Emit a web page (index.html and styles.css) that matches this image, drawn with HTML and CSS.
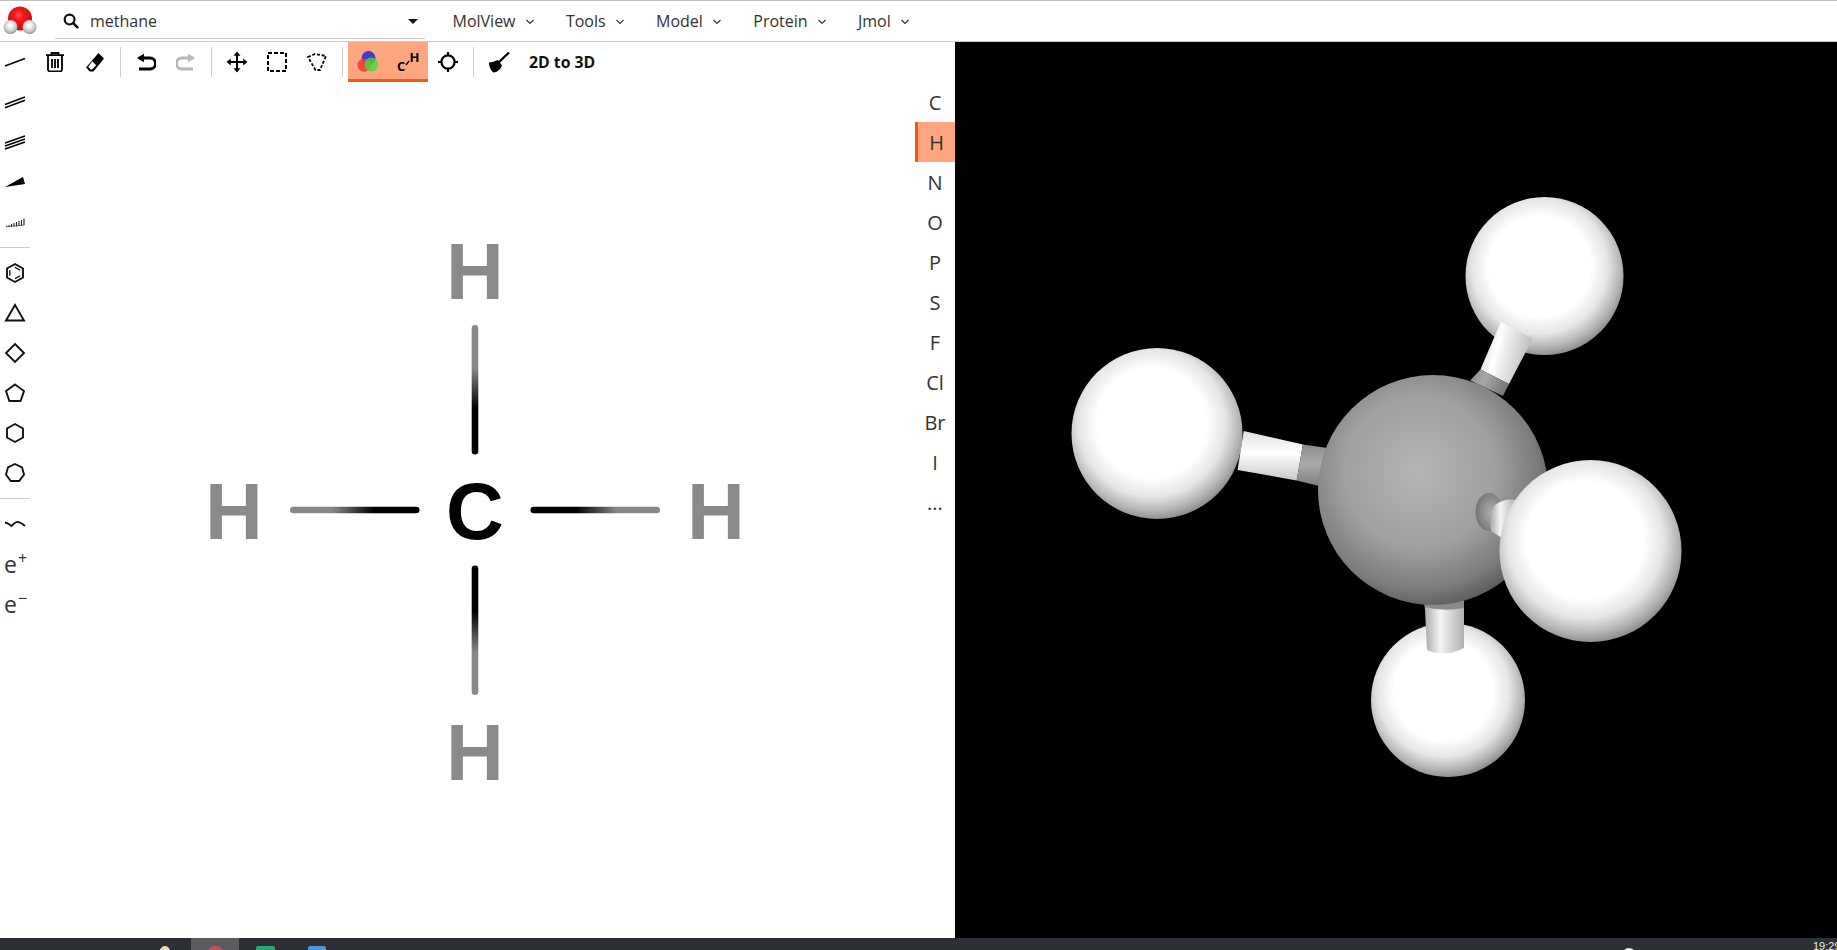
FILE: index.html
```html
<!DOCTYPE html>
<html lang="en">
<head>
<meta charset="utf-8">
<title>MolView</title>
<link rel="stylesheet" href="styles.css">
</head>
<body>
<div class="app">
  <nav class="menubar">
    <svg class="logo" width="40" height="38" viewBox="0 0 40 38">
      <defs>
        <radialGradient id="logoRed" cx="0.45" cy="0.35" r="0.7">
          <stop offset="0" stop-color="#ff5050"/><stop offset="0.3" stop-color="#f01818"/><stop offset="0.8" stop-color="#d80c0c"/><stop offset="1" stop-color="#a01010"/>
        </radialGradient>
        <radialGradient id="logoWhite" cx="0.48" cy="0.4" r="0.62">
          <stop offset="0" stop-color="#ffffff"/><stop offset="0.35" stop-color="#eaeaea"/><stop offset="0.75" stop-color="#bdbdbd"/><stop offset="1" stop-color="#808080"/>
        </radialGradient>
      </defs>
      <circle cx="20" cy="16.5" r="12" fill="url(#logoRed)"/>
      <circle cx="10.5" cy="25" r="7" fill="url(#logoWhite)"/>
      <circle cx="29.5" cy="25" r="7" fill="url(#logoWhite)"/>
    </svg>
    <div class="search">
      <svg class="search-icon" width="16" height="16" viewBox="0 0 16 16"><circle cx="6.6" cy="6.6" r="4.9" fill="none" stroke="#111" stroke-width="2.2"/><path d="M10.2 10.2 14.4 14.4" stroke="#111" stroke-width="2.6" stroke-linecap="round"/></svg>
      <span class="search-text">methane</span>
      <span class="search-caret"></span>
    </div>
    <ul class="menu">
      <li class="menu-item">MolView<svg class="chev" width="10" height="6" viewBox="0 0 10 6"><path d="M1.5 1 5 4.5 8.5 1" fill="none" stroke="#333" stroke-width="1.2"/></svg></li>
      <li class="menu-item">Tools<svg class="chev" width="10" height="6" viewBox="0 0 10 6"><path d="M1.5 1 5 4.5 8.5 1" fill="none" stroke="#333" stroke-width="1.2"/></svg></li>
      <li class="menu-item">Model<svg class="chev" width="10" height="6" viewBox="0 0 10 6"><path d="M1.5 1 5 4.5 8.5 1" fill="none" stroke="#333" stroke-width="1.2"/></svg></li>
      <li class="menu-item">Protein<svg class="chev" width="10" height="6" viewBox="0 0 10 6"><path d="M1.5 1 5 4.5 8.5 1" fill="none" stroke="#333" stroke-width="1.2"/></svg></li>
      <li class="menu-item">Jmol<svg class="chev" width="10" height="6" viewBox="0 0 10 6"><path d="M1.5 1 5 4.5 8.5 1" fill="none" stroke="#333" stroke-width="1.2"/></svg></li>
    </ul>
  </nav>

  <main class="workspace">
    <section class="sketcher">
      <aside class="tools-left">
        <div class="tool"><svg width="22" height="22" viewBox="0 0 22 22"><path d="M1 15 21 7.5" stroke="#000" stroke-width="1.5"/></svg></div>
        <div class="tool"><svg width="22" height="22" viewBox="0 0 22 22"><path d="M1 13.5 21 6M1 16.7 21 9.2" stroke="#000" stroke-width="1.5"/></svg></div>
        <div class="tool"><svg width="22" height="22" viewBox="0 0 22 22"><path d="M1 12 21 5M1 15 21 8M1 18 21 11" stroke="#000" stroke-width="1.5"/></svg></div>
        <div class="tool"><svg width="22" height="22" viewBox="0 0 22 22"><path d="M1 16 19 6 21 13Z" fill="#000"/></svg></div>
        <div class="tool"><svg width="22" height="22" viewBox="0 0 22 22"><path d="M2.5 15.8V14.8M5 15.8V14M7.5 15.8V13M10 15.6V12M12.5 15.4V11M15 15V10M17.5 14.6V9M20 14.2V7.5" stroke="#222" stroke-width="1.1" fill="none"/><path d="M2 15.8 20 14" stroke="#444" stroke-width=".8"/></svg></div>
        <div class="divider"></div>
        <div class="tool"><svg width="22" height="22" viewBox="0 0 22 22"><path d="M11 2 19 6.5V15.5L11 20 3 15.5V6.5Z" fill="none" stroke="#111" stroke-width="1.9"/><path d="M11 5.4 16.2 8.3M16.2 13.7 11 16.6M5.8 13.7V8.3" fill="none" stroke="#111" stroke-width="1.3"/></svg></div>
        <div class="tool"><svg width="22" height="22" viewBox="0 0 22 22"><path d="M11 3 20 18.5H2Z" fill="none" stroke="#111" stroke-width="1.9"/></svg></div>
        <div class="tool"><svg width="22" height="22" viewBox="0 0 22 22"><path d="M11 2 20 11 11 20 2 11Z" fill="none" stroke="#111" stroke-width="1.9"/></svg></div>
        <div class="tool"><svg width="22" height="22" viewBox="0 0 22 22"><path d="M11 2.5 20 9 16.6 19H5.4L2 9Z" fill="none" stroke="#111" stroke-width="1.9"/></svg></div>
        <div class="tool"><svg width="22" height="22" viewBox="0 0 22 22"><path d="M11 2 19 6.5V15.5L11 20 3 15.5V6.5Z" fill="none" stroke="#111" stroke-width="1.9"/></svg></div>
        <div class="tool"><svg width="22" height="22" viewBox="0 0 22 22"><path d="M11 2 18 5.3 20 12.5 15.2 19H6.8L2 12.5 4 5.3Z" fill="none" stroke="#111" stroke-width="1.9"/></svg></div>
        <div class="divider"></div>
        <div class="tool"><svg width="22" height="22" viewBox="0 0 22 22"><path d="M1 9.5Q4 10 7.5 13Q11 9 14 8.8Q18 10 21 13" fill="none" stroke="#111" stroke-width="1.8"/></svg></div>
        <div class="tool tool-text">e<sup class="charge">+</sup></div>
        <div class="tool tool-text">e<sup class="charge">−</sup></div>
      </aside>

      <div class="editor">
        <div class="toolbar">
          <button class="btn"><svg width="20" height="20" viewBox="0 0 20 20"><path d="M1 3.2H19M6.5 3.2V1H13.5V3.2M3 3.2V17.5A1.8 1.8 0 0 0 4.8 19.3H15.2A1.8 1.8 0 0 0 17 17.5V3.2M7 7V16M10 7V16M13 7V16" fill="none" stroke="#000" stroke-width="1.8"/></svg></button>
          <button class="btn"><svg width="20" height="20" viewBox="0 0 20 20"><path d="M13.5 1 19 6.5 8.5 19.5H4.8L1 15.5Z" fill="#000"/><path d="M7.2 9.2 11.2 13.2 7 17.5H5.6L3.2 15Z" fill="#fff"/></svg></button>
          <span class="sep"></span>
          <button class="btn"><svg width="20" height="20" viewBox="0 0 20 20"><path d="M3 6H14A5.5 5.5 0 0 1 14 17H3" fill="none" stroke="#000" stroke-width="2.8"/><path d="M8 1.8V10.2L1 6Z" fill="#000"/></svg></button>
          <button class="btn"><svg width="20" height="20" viewBox="0 0 20 20"><path d="M17 6H6A5.5 5.5 0 0 0 6 17H17" fill="none" stroke="#b8b8b8" stroke-width="2.8"/><path d="M12 1.8V10.2L19 6Z" fill="#b8b8b8"/></svg></button>
          <span class="sep"></span>
          <button class="btn"><svg width="22" height="22" viewBox="0 0 22 22"><path d="M11 3V19M3 11H19" stroke="#000" stroke-width="2"/><path d="M11 .5 14.5 4.8H7.5ZM11 21.5 14.5 17.2H7.5ZM.5 11 4.8 7.5V14.5ZM21.5 11 17.2 7.5V14.5Z" fill="#000"/></svg></button>
          <button class="btn"><svg width="20" height="20" viewBox="0 0 20 20"><rect x="1" y="1" width="18" height="18" fill="none" stroke="#000" stroke-width="2" stroke-dasharray="4 2"/></svg></button>
          <button class="btn"><svg width="20" height="20" viewBox="0 0 20 20"><path d="M1 5 8 2 19 4 13 18 8.5 18Z" fill="none" stroke="#000" stroke-width="1.8" stroke-dasharray="3 1.8"/></svg></button>
          <span class="sep"></span>
          <div class="btn-group">
            <button class="btn"><svg width="22" height="24" viewBox="0 0 22 24">
              <circle cx="11.5" cy="8" r="7" fill="#4a3ac8"/><circle cx="7" cy="15.2" r="6.5" fill="#ee3a34" fill-opacity=".88"/><circle cx="14.4" cy="14.6" r="7" fill="#4fd63a" fill-opacity=".82"/>
              </svg></button>
            <button class="btn"><svg width="26" height="24" viewBox="0 0 26 24">
              <text class="ch-text" x="2" y="21">C</text><path d="M11 15 14 11" stroke="#000" stroke-width="1.3"/><text class="ch-text" x="14.5" y="12">H</text></svg></button>
          </div>
          <button class="btn"><svg width="22" height="22" viewBox="0 0 22 22"><circle cx="11" cy="11" r="6.6" fill="none" stroke="#000" stroke-width="2.2"/><path d="M11 1V5M11 17V21M1 11H5M17 11H21" stroke="#000" stroke-width="2.2"/></svg></button>
          <span class="sep"></span>
          <button class="btn"><svg width="22" height="24" viewBox="0 0 22 24"><path d="M1 12.5C4 12.5 7 11 10 10L14 15.5C13 19 9 22.5 5.5 22.5 2.5 20.5 1 16 1 12.5Z" fill="#000"/><path d="M10.5 12.5 21 2.5" stroke="#000" stroke-width="2.4"/></svg></button>
          <span class="convert">2D to 3D</span>
        </div>
        <svg class="structure" viewBox="35 82 880 856">
          <defs>
            <linearGradient id="bondDown" x1="0" y1="0" x2="0" y2="1"><stop offset="0.33" stop-color="#888"/><stop offset="0.65" stop-color="#000"/></linearGradient>
            <linearGradient id="bondUp" x1="0" y1="1" x2="0" y2="0"><stop offset="0.33" stop-color="#888"/><stop offset="0.65" stop-color="#000"/></linearGradient>
            <linearGradient id="bondRight" x1="0" y1="0" x2="1" y2="0"><stop offset="0.33" stop-color="#888"/><stop offset="0.65" stop-color="#000"/></linearGradient>
            <linearGradient id="bondLeft" x1="1" y1="0" x2="0" y2="0"><stop offset="0.33" stop-color="#888"/><stop offset="0.65" stop-color="#000"/></linearGradient>
          </defs>
          <rect x="471.7" y="325" width="6.6" height="129.5" rx="3.3" fill="url(#bondDown)"/>
          <rect x="471.7" y="565.5" width="6.6" height="129.5" rx="3.3" fill="url(#bondUp)"/>
          <rect x="290" y="506.7" width="129.5" height="6.6" rx="3.3" fill="url(#bondRight)"/>
          <rect x="530.5" y="506.7" width="129.5" height="6.6" rx="3.3" fill="url(#bondLeft)"/>
          <text class="atom atom-h" x="475" y="299">H</text>
          <text class="atom atom-h" x="234" y="539">H</text>
          <text class="atom atom-c" x="475" y="539">C</text>
          <text class="atom atom-h" x="716" y="539">H</text>
          <text class="atom atom-h" x="475" y="780">H</text>
        </svg>
      </div>

      <aside class="elements">
        <div class="element">C</div>
        <div class="element element-active">H</div>
        <div class="element">N</div>
        <div class="element">O</div>
        <div class="element">P</div>
        <div class="element">S</div>
        <div class="element">F</div>
        <div class="element">Cl</div>
        <div class="element">Br</div>
        <div class="element">I</div>
        <div class="element">...</div>
      </aside>
    </section>

    <section class="viewer">
      <svg class="model" viewBox="955 42 882 896">
        <defs>
          <radialGradient id="sphereH" cx="0.47" cy="0.44" r="0.57">
            <stop offset="0" stop-color="#fff"/><stop offset="0.56" stop-color="#fff"/><stop offset="0.75" stop-color="#e6e6e6"/><stop offset="0.9" stop-color="#b4b4b4"/><stop offset="1" stop-color="#8a8a8a"/>
          </radialGradient>
          <radialGradient id="sphereC" cx="0.44" cy="0.42" r="0.6">
            <stop offset="0" stop-color="#b4b4b4"/><stop offset="0.55" stop-color="#a0a0a0"/><stop offset="0.85" stop-color="#7c7c7c"/><stop offset="1" stop-color="#5c5c5c"/>
          </radialGradient>
          <radialGradient id="capGray" cx="0.6" cy="0.5" r="0.6">
            <stop offset="0" stop-color="#b0b0b0"/><stop offset="1" stop-color="#747474"/>
          </radialGradient>
          <linearGradient id="bondA" x1="0" y1="0" x2="1" y2="0.3"><stop offset="0" stop-color="#c8c8c8"/><stop offset="0.4" stop-color="#fff"/><stop offset="1" stop-color="#bdbdbd"/></linearGradient>
          <linearGradient id="bondB" x1="0.2" y1="0" x2="0.2" y2="1"><stop offset="0" stop-color="#e0e0e0"/><stop offset="0.45" stop-color="#fff"/><stop offset="1" stop-color="#c8c8c8"/></linearGradient>
          <linearGradient id="bondC" x1="0" y1="0" x2="1" y2="0"><stop offset="0" stop-color="#a8a8a8"/><stop offset="0.4" stop-color="#f4f4f4"/><stop offset="1" stop-color="#b0b0b0"/></linearGradient>
          <linearGradient id="bondGrayA" x1="0" y1="0" x2="1" y2="0.3"><stop offset="0" stop-color="#8c8c8c"/><stop offset="0.45" stop-color="#a8a8a8"/><stop offset="1" stop-color="#787878"/></linearGradient>
          <linearGradient id="bondGrayB" x1="0.2" y1="0" x2="0.2" y2="1"><stop offset="0" stop-color="#8c8c8c"/><stop offset="0.45" stop-color="#aaa"/><stop offset="1" stop-color="#7c7c7c"/></linearGradient>
        </defs>
        <!-- far atoms -->
        <circle cx="1544.5" cy="276" r="79" fill="url(#sphereH)"/>
        <circle cx="1448" cy="700" r="77" fill="url(#sphereH)"/>
        <circle cx="1157" cy="433.5" r="85.5" fill="url(#sphereH)"/>
        <!-- bonds -->
        <path d="M1500.8 322 1532.7 338.8 1509 384 1480.4 369.5Z" fill="url(#bondA)"/>
        <path d="M1480.4 369.5 1509 384 1502.9 396 1470.2 380.4Z" fill="url(#bondGrayA)"/>
        <path d="M1243.7 431 1302.9 444.6 1296.7 480.4 1237.6 469.9Z" fill="url(#bondB)"/>
        <path d="M1302.9 444.6 1331.4 448.5 1325.3 487.4 1296.7 480.4Z" fill="url(#bondGrayB)"/>
        <path d="M1424.5 600H1464V648Q1444 658 1427 650Z" fill="url(#bondC)"/>
        <path d="M1424.5 600H1464V608Q1444 612 1424.5 607Z" fill="#8a8a8a"/>
        <!-- carbon -->
        <circle cx="1433" cy="490" r="115" fill="url(#sphereC)"/>
        <!-- near bond -->
        <ellipse cx="1489" cy="512" rx="13.5" ry="19" fill="url(#capGray)"/>
        <path d="M1495 505Q1505 498 1516 500L1505 540 1491 531Q1488 515 1495 505Z" fill="url(#bondC)"/>
        <circle cx="1590.5" cy="551" r="91" fill="url(#sphereH)"/>
      </svg>
    </section>
  </main>

  <footer class="taskbar">
    <span class="task-app"><span class="task-icon task-yellow"></span></span>
    <span class="task-app task-app-active"><span class="task-icon task-red"></span></span>
    <span class="task-app"><span class="task-icon task-green"></span></span>
    <span class="task-app"><span class="task-icon task-blue"></span></span>
    <span class="task-spacer"></span>
    <span class="task-dome"></span>
    <span class="task-clock">19:29</span>
  </footer>
</div>
</body>
</html>
```

FILE: styles.css
```css
* { box-sizing: border-box; }

html, body {
  margin: 0;
  height: 100%;
  overflow: hidden;
  background: #fff;
}

body {
  font-family: "Open Sans", "Liberation Sans", sans-serif;
  color: #222;
}

.app {
  display: flex;
  flex-direction: column;
  width: 1837px;
  height: 950px;
  overflow: hidden;
}

/* Menu bar */
.menubar {
  flex: 0 0 42px;
  display: flex;
  align-items: center;
  border-top: 1px solid #bdbdbd;
  border-bottom: 1px solid #ccc;
  background: #fff;
}

.logo {
  flex: none;
  margin-right: 15px;
}

.search {
  flex: none;
  width: 370px;
  height: 36px;
  display: flex;
  align-items: center;
  padding: 1px 7px 0 8px;
  border-bottom: 1px solid #ccc;
}

.search-icon { flex: none; }

.search-text {
  flex: 1;
  margin-left: 11px;
  font-size: 16px;
  line-height: 22px;
  color: #333;
}

.search-caret {
  width: 0;
  height: 0;
  border-left: 5.5px solid transparent;
  border-right: 5.5px solid transparent;
  border-top: 5.5px solid #111;
}

.menu {
  display: flex;
  margin: 0 0 0 27.5px;
  padding: 0;
  list-style: none;
}

.menu-item {
  display: flex;
  align-items: center;
  margin-right: 31.4px;
  font-size: 16px;
  color: #333;
  white-space: nowrap;
}

.chev { margin-left: 9px; margin-top: 2px; }

/* Workspace */
.workspace {
  flex: 1;
  display: flex;
  min-height: 0;
}

.sketcher {
  flex: 0 0 955px;
  display: flex;
  background: #fff;
}

.tools-left {
  flex: 0 0 35px;
  padding-right: 5px;
}

.tool {
  height: 40px;
  display: flex;
  align-items: center;
  padding-left: 4px;
}

.tool-text {
  display: block;
  padding-left: 4px;
  font-size: 23px;
  line-height: 40px;
  color: #333;
}

.charge {
  font-size: 16px;
  line-height: 0;
  margin-left: 1px;
  vertical-align: 9px;
}

.divider {
  height: 1px;
  margin: 5px 0;
  background: #ccc;
}

.editor {
  flex: 1;
  min-width: 0;
  display: flex;
  flex-direction: column;
}

.toolbar {
  flex: 0 0 40px;
  display: flex;
  align-items: stretch;
}

.btn {
  flex: 0 0 40px;
  height: 40px;
  padding: 0;
  border: 0;
  background: none;
  display: flex;
  align-items: center;
  justify-content: center;
}

.btn-group {
  display: flex;
  height: 40px;
  background: #ffa680;
  border-bottom: 3px solid #f05a14;
}

.btn-group .btn { height: 37px; padding-top: 3px; }

.ch-text {
  font-family: "Open Sans", "Liberation Sans", sans-serif;
  font-weight: 700;
  font-size: 13px;
  fill: #000;
}

.sep {
  flex: none;
  width: 1px;
  height: 30px;
  margin: 5px 5px 0;
  background: #ccc;
}

.convert {
  align-self: center;
  margin-left: 10px;
  font-size: 15.8px;
  font-weight: 700;
  color: #111;
  white-space: nowrap;
}

.structure {
  flex: 1;
  display: block;
  width: 880px;
  min-height: 0;
}

.atom {
  font-family: "Liberation Sans", Arial, sans-serif;
  font-weight: 700;
  font-size: 80px;
  text-anchor: middle;
}

.atom-h { fill: #8a8a8a; }
.atom-c { fill: #000; }

/* Element column */
.elements {
  flex: 0 0 40px;
  padding-top: 40px;
}

.element {
  height: 40px;
  display: flex;
  align-items: center;
  justify-content: center;
  font-size: 20px;
  color: #333;
}

.element-active {
  background: #ffa680;
  border-left: 3px solid #f05a14;
}

/* 3D viewer */
.viewer {
  flex: 1;
  background: #000;
  min-width: 0;
}

.model {
  display: block;
  width: 100%;
  height: 100%;
}

/* Taskbar */
.taskbar {
  flex: 0 0 12px;
  display: flex;
  align-items: flex-start;
  padding-left: 139px;
  background: #2c3034;
  overflow: hidden;
}

.task-app {
  flex: none;
  width: 52px;
  height: 12px;
  display: flex;
  justify-content: center;
  padding-top: 8px;
}

.task-app-active {
  background: #5c5c60;
  width: 48px;
}

.task-icon {
  display: block;
  width: 17px;
  height: 17px;
  flex: none;
}

.task-yellow { width: 12px; border-radius: 50%; background: #e8dfb0; }
.task-red { border-radius: 50%; background: #c9504a; }
.task-green { width: 19px; background: #27a96b; border-radius: 2px 2px 0 0; }
.task-blue { width: 18px; background: #4a97e0; border-radius: 2px 2px 0 0; }

.task-spacer { flex: 1; }

.task-dome {
  flex: none;
  width: 14px;
  height: 14px;
  margin-top: 10px;
  margin-right: 177px;
  border-radius: 50%;
  background: #e8e8e8;
}

.task-clock {
  flex: none;
  width: 24px;
  margin-top: 1px;
  font-family: "Liberation Sans", Arial, sans-serif;
  font-size: 11px;
  line-height: 14px;
  color: #eee;
  white-space: nowrap;
}
```
